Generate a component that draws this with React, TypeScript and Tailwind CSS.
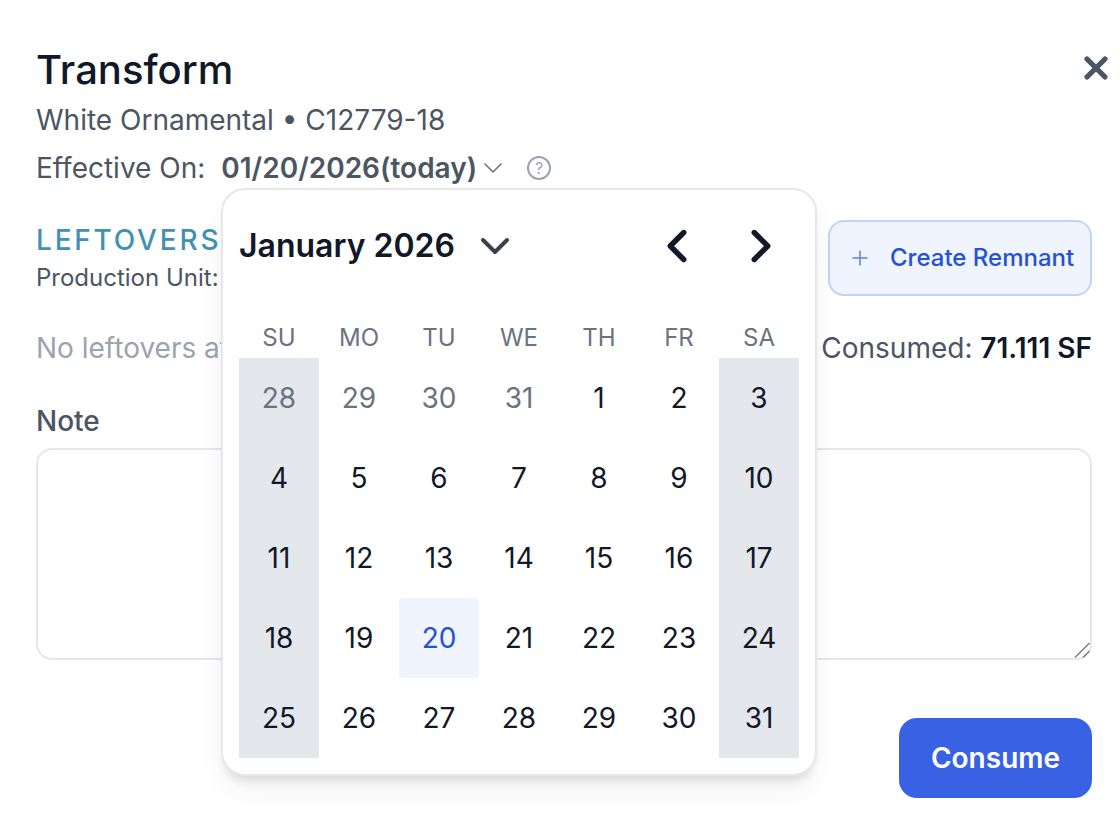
import React from 'react';
import { ChevronDown, ChevronLeft, ChevronRight, Plus, X } from 'lucide-react';

const weekDays = ['SU', 'MO', 'TU', 'WE', 'TH', 'FR', 'SA'];

const days = [
  28, 29, 30, 31, 1, 2, 3,
  4, 5, 6, 7, 8, 9, 10,
  11, 12, 13, 14, 15, 16, 17,
  18, 19, 20, 21, 22, 23, 24,
  25, 26, 27, 28, 29, 30, 31,
];

function Calendar() {
  return (
    <div className="absolute left-[221px] top-[188px] w-[596px] h-[588px] bg-white border-2 border-[#e5e7eb] rounded-[24px] px-[16px] shadow-[0_8px_10px_-4px_rgba(0,0,0,0.12),0_16px_32px_-4px_rgba(0,0,0,0.06)]">
      <div className="flex items-center h-[111px]">
        <span className="text-[32px] font-semibold text-[#111827]">January 2026</span>
        <ChevronDown size={48} strokeWidth={2} className="ml-[16px] text-[#374151]" />
        <ChevronLeft size={54} strokeWidth={2.4} className="ml-auto mr-[30px] text-[#111827]" />
        <ChevronRight size={54} strokeWidth={2.4} className="mr-[11px] text-[#111827]" />
      </div>
      <div className="grid grid-cols-7 w-[560px]">
        {weekDays.map((d) => (
          <div key={d} className="h-[57px] pt-[16px] flex items-center justify-center text-[24px] text-[#6b7280]">
            {d}
          </div>
        ))}
        {days.map((d, i) => {
          const weekend = i % 7 === 0 || i % 7 === 6;
          const muted = i < 4;
          const today = i === 23;
          return (
            <div
              key={i}
              className={`h-[80px] flex items-center justify-center text-[28px] ${
                muted ? 'text-[#6b7280]' : today ? 'text-[#2451d6]' : 'text-[#111827]'
              } ${weekend ? 'bg-[#e4e7ec]' : ''} ${today ? 'bg-[#eff4fe] rounded-[4px]' : ''}`}
            >
              {d}
            </div>
          );
        })}
      </div>
    </div>
  );
}

export default function App() {
  return (
    <div className="relative w-[1120px] h-[836px] bg-white overflow-hidden pl-[36px] pr-[28px] font-['Inter',sans-serif]">
      {/* Header */}
      <div className="flex items-start justify-between pt-[44px]">
        <h1 className="text-[40px] leading-[52px] font-medium text-[#111827]">Transform</h1>
        <X size={36} strokeWidth={3.5} className="mt-[6px] -mr-[22px] text-[#4b5563]" />
      </div>
      <p className="mt-[6px] text-[28px] leading-[36px] text-[#4b5563]">White Ornamental • C12779-18</p>
      <div className="flex items-center mt-[12px] h-[36px] text-[28px] text-[#4b5563]">
        <span>Effective On:</span>
        <span className="ml-[16px] font-semibold">01/20/2026(today)</span>
        <ChevronDown size={32} strokeWidth={1.2} className="text-[#6b7280]" />
        <span className="ml-[18px] w-[24px] h-[24px] rounded-full border-2 border-[#9ca3af] flex items-center justify-center text-[16px] leading-none text-[#9ca3af]">?</span>
      </div>

      {/* Leftovers */}
      <div className="flex items-start justify-between mt-[34px] h-[76px]">
        <div className="pt-[3px]">
          <div className="text-[28px] leading-[34px] font-medium tracking-[2.8px] text-[#4291b3]">LEFTOVERS</div>
          <div className="mt-[5px] text-[24px] leading-[32px] text-[#4b5563]">Production Unit:</div>
        </div>
        <button className="flex items-center w-[264px] h-[76px] bg-[#eff4fe] border-2 border-[#bfd4f8] rounded-[16px] pl-[18px] text-[24px] font-medium text-[#2451d6]">
          <Plus size={24} strokeWidth={1.5} className="text-[#5b80e0] mr-[18px]" />
          Create Remnant
        </button>
      </div>
      <div className="flex items-center justify-between mt-[34px] h-[36px] text-[28px]">
        <span className="text-[#9ca3af]">No leftovers at</span>
        <span className="text-[#4b5563]">
          Consumed: <span className="font-semibold text-[#111827]">71.111 SF</span>
        </span>
      </div>

      {/* Note */}
      <label className="block mt-[37px] text-[28px] leading-[36px] font-medium text-[#4b5563]">Note</label>
      <div className="relative mt-[9px] w-[1056px] h-[212px]">
        <textarea className="block w-full h-full border-2 border-[#e5e7eb] rounded-[16px] bg-white outline-none resize-none" />
        <svg className="absolute right-[2px] bottom-[2px]" width="16" height="16" viewBox="0 0 16 16" fill="none" stroke="#777c85" strokeWidth="1.4">
          <path d="M1 15.5 15.5 1" />
          <path d="M9 15.5 15.5 9" />
        </svg>
      </div>

      <div className="flex justify-end mt-[58px]">
        <button className="w-[193px] h-[80px] rounded-[18px] bg-[#3862e3] text-white text-[28px] font-semibold">Consume</button>
      </div>

      <Calendar />
    </div>
  );
}
